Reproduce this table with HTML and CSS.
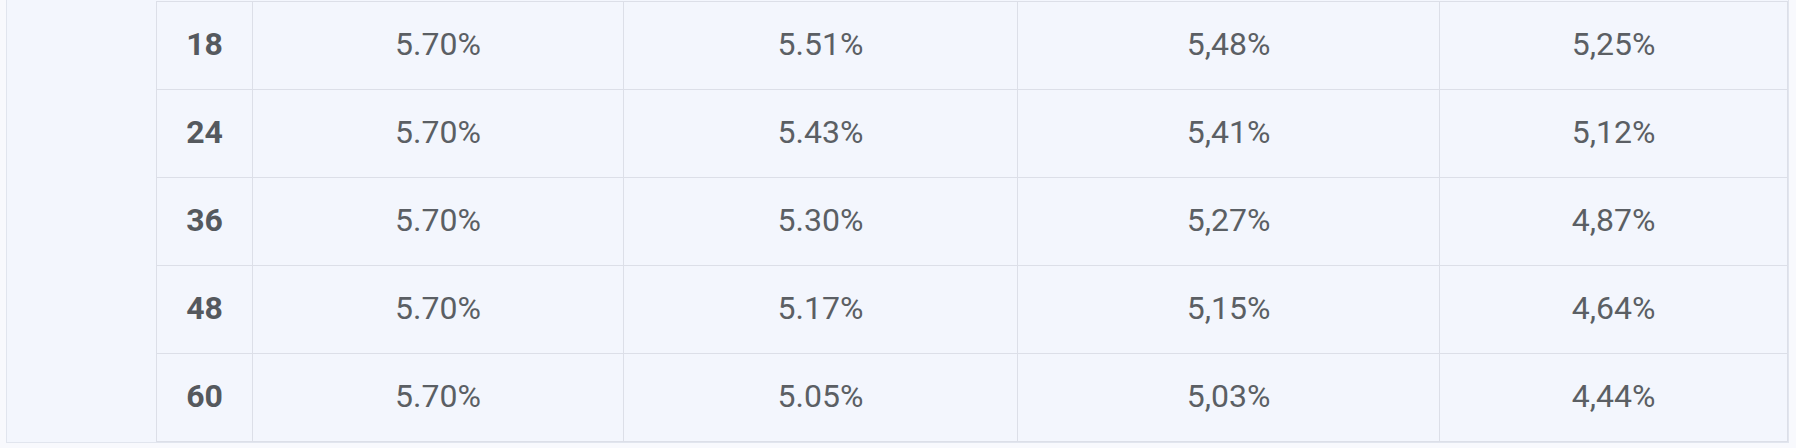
FILE: index.html
```html
<!DOCTYPE html>
<html lang="en">
<head>
<meta charset="utf-8">
<title>Rates</title>
<link rel="stylesheet" href="styles.css">
</head>
<body>
<div class="card">
  <table class="rates">
    <colgroup>
      <col class="c-term">
      <col class="c-a">
      <col class="c-b">
      <col class="c-c">
      <col class="c-d">
    </colgroup>
    <tbody>
      <tr><th>18</th><td>5.70%</td><td>5.51%</td><td>5,48%</td><td>5,25%</td></tr>
      <tr><th>24</th><td>5.70%</td><td>5.43%</td><td>5,41%</td><td>5,12%</td></tr>
      <tr><th>36</th><td>5.70%</td><td>5.30%</td><td>5,27%</td><td>4,87%</td></tr>
      <tr><th>48</th><td>5.70%</td><td>5.17%</td><td>5,15%</td><td>4,64%</td></tr>
      <tr><th>60</th><td>5.70%</td><td>5.05%</td><td>5,03%</td><td>4,44%</td></tr>
    </tbody>
  </table>
</div>
</body>
</html>
```
FILE: styles.css
```css
html, body {
  margin: 0;
  padding: 0;
}
body {
  background: #f8f9fd;
  font-family: Roboto, "Liberation Sans", Arial, sans-serif;
  color: #5f6368;
}
.card {
  margin-left: 6px;
  width: 1783px;
  box-sizing: border-box;
  background: #f3f6fd;
  border: 1px solid #e1e5ee;
  border-top: 0;
  padding: 1px 1px 0 149px;
}
.rates {
  border-collapse: collapse;
  table-layout: fixed;
  width: 1631px;
}
.c-term { width: 96px; }
.c-a { width: 371px; }
.c-b { width: 394px; }
.c-c { width: 422px; }
.c-d { width: 348px; }
.rates th,
.rates td {
  border: 1px solid #dcdfe8;
  height: 84px;
  padding: 0 0 3px;
  text-align: center;
  vertical-align: middle;
  font-size: 32px;
  line-height: 1;
}
.rates th {
  font-weight: 700;
  color: #55595e;
}
.rates td {
  font-weight: 400;
  color: #5b5f64;
}
```
